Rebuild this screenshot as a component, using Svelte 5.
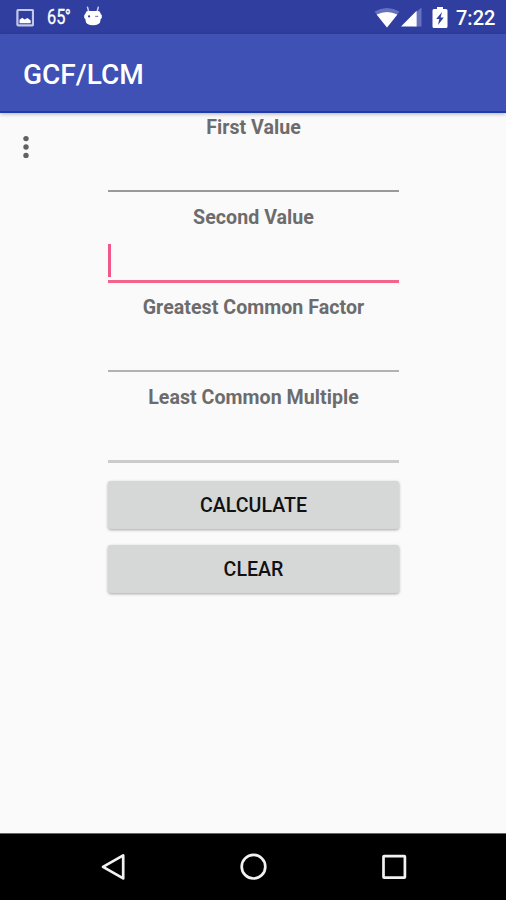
<script>
  let fields = $state([
    { label: 'First Value', kind: 'plain' },
    { label: 'Second Value', kind: 'focused' },
    { label: 'Greatest Common Factor', kind: 'light' },
    { label: 'Least Common Multiple', kind: 'disabled' }
  ]);
</script>

<div class="screen">
  <div class="status">
    <div class="group left">
      <svg class="picture" width="18" height="18" viewBox="0 0 18 18">
        <rect x="1.4" y="1" width="15.6" height="15.4" rx="1" fill="none" stroke="#c3c8e9" stroke-width="2.2" />
        <path d="M3.5 14.2V10.8L6.3 8.8L8.5 10.5L11.5 9L14.7 11.5V14.2Z" fill="#fff" />
      </svg>
      <span class="temp">65<span class="deg">°</span></span>
      <svg class="robot" width="20" height="21" viewBox="0 0 20 21">
        <path d="M4.5 1.2L5.8 6M15.3 1.2L14 6" stroke="#c9cff0" stroke-width="1.5" stroke-linecap="round" />
        <path d="M4.6 5H15.4Q17.3 5 17.5 7.6L18.8 9.2V12L17.5 13.3V14.5Q17 19.3 10 19.3Q3 19.3 2.5 14.5V13.3L1.2 12V9.2L2.5 7.6Q2.7 5 4.6 5Z" fill="#fff" />
        <circle cx="6.1" cy="10.4" r="1.1" fill="#303f9f" />
        <path d="M12.2 10.4H15.2" stroke="#7883c6" stroke-width="1.2" />
      </svg>
    </div>
    <div class="group right">
      <svg class="wifi" width="26" height="20" viewBox="0 0 26 20">
        <path d="M0.5 3.6Q13 -3.6 25.5 3.6L13 19.5Z" fill="#6672bd" />
        <path d="M2.6 6.6Q13 1.2 23.4 6.6L13 19.5Z" fill="#fff" />
      </svg>
      <svg class="signal" width="21" height="20" viewBox="0 0 21 20">
        <path d="M13 7L20.5 0.5V19.5H13Z" fill="#6672bd" />
        <path d="M0 19.5L15.6 3.8V19.5Z" fill="#fff" />
      </svg>
      <svg class="battery" width="16" height="21" viewBox="0 0 16 21">
        <path d="M5 0H11V2H14Q15.5 2 15.5 3.5V19.5Q15.5 21 14 21H2Q.5 21 .5 19.5V3.5Q.5 2 2 2H5Z" fill="#fff" />
        <path d="M10 5L4.2 12H7.3L6 18L11.8 10.5H8.6Z" fill="#303f9f" />
      </svg>
      <span class="time">7:22</span>
    </div>
  </div>

  <header><h1>GCF/LCM</h1></header>

  <main>
    <button class="more" aria-label="More options">
      <svg width="8" height="24" viewBox="0 0 8 24">
        <circle cx="4" cy="3.6" r="2.7" /><circle cx="4" cy="12" r="2.7" /><circle cx="4" cy="20.4" r="2.7" />
      </svg>
    </button>
    <div class="form">
      {#each fields as field}
        <div class="field">
          <div class="label">{field.label}</div>
          <div class="entry {field.kind}">
            {#if field.kind === 'focused'}<span class="caret"></span>{/if}
          </div>
        </div>
      {/each}
      <button class="action">CALCULATE</button>
      <button class="action">CLEAR</button>
    </div>
  </main>

  <nav>
    <svg width="30" height="30" viewBox="0 0 30 30"><path d="M25.2 3.4V26.4L5 14.9Z" /></svg>
    <svg width="30" height="30" viewBox="0 0 30 30"><circle cx="14.5" cy="14.7" r="11.8" /></svg>
    <svg width="30" height="30" viewBox="0 0 30 30"><rect x="4.5" y="4.2" width="21.4" height="21.4" rx=".6" /></svg>
  </nav>
</div>

<style>
  .screen {
    display: flex;
    flex-direction: column;
    width: 506px;
    height: 900px;
    overflow: hidden;
    background: #fafafa;
    font-family: Roboto, "Liberation Sans", sans-serif;
  }
  svg { display: block; flex: none; }
  .status {
    flex: none;
    display: flex;
    justify-content: space-between;
    height: 34px;
    background: #303f9f;
    color: #fff;
  }
  .group { display: flex; align-items: flex-start; }
  .left { padding-left: 16px; }
  .picture { margin-top: 9px; }
  .temp {
    width: 37px;
    margin: 5px 0 0 13px;
    font-size: 21px;
    line-height: 24px;
    transform: scaleX(0.78);
    transform-origin: left;
    color: #fff;
    -webkit-text-stroke: 0.3px #fff;
  }
  .deg { margin-left: -1px; }
  .robot { margin: 6px 0 0 -1px; }
  .right { padding-right: 10px; }
  .wifi { margin-top: 8px; }
  .signal { margin: 7px 0 0 1px; }
  .battery { margin: 7px 0 0 10px; }
  .time {
    width: 40px;
    margin: 6px 0 0 8px;
    font-size: 20px;
    font-weight: 500;
    line-height: 24px;
    white-space: nowrap;
  }
  header {
    flex: none;
    box-sizing: border-box;
    height: 79px;
    padding: 24px 0 0 23px;
    background: #3f51b5;
    border-bottom: 2px solid #1e3dab;
    box-shadow: 0 1px 4px rgba(0, 0, 0, 0.3);
    z-index: 1;
  }
  h1 {
    margin: 0;
    color: #fff;
    font-size: 28px;
    font-weight: 500;
    line-height: 34px;
  }
  main {
    flex: 1;
    display: flex;
    align-items: flex-start;
  }
  button { border: 0; font-family: inherit; }
  .more {
    width: 108px;
    padding: 22px 0 0 22px;
    background: none;
  }
  .more svg { fill: #616161; }
  .form {
    display: flex;
    flex-direction: column;
    width: 291px;
    padding-top: 2px;
  }
  .field { height: 90px; }
  .label {
    height: 26px;
    color: #6c6c6c;
    font-size: 19.6px;
    font-weight: 700;
    letter-spacing: 0.04px;
    line-height: 25px;
    text-align: center;
    white-space: nowrap;
  }
  .entry {
    box-sizing: border-box;
    height: 51px;
    border-bottom: 2px solid #999;
  }
  .entry.light { border-color: #b2b2b2; }
  .entry.focused { height: 52px; border-bottom: 3px solid #f5638c; }
  .entry.disabled { height: 52px; border-bottom: 3px solid #cbcbcb; }
  .caret {
    display: block;
    width: 3px;
    height: 33px;
    background: #f0588a;
    transform: translateY(13px);
  }
  .action {
    height: 48px;
    margin-top: 6px;
    padding: 2px 0 0;
    border-radius: 3px;
    background: #d6d7d7;
    box-shadow: 0 1px 3px rgba(0, 0, 0, 0.35);
    color: #111;
    font-size: 19.6px;
    font-weight: 500;
    line-height: 46px;
  }
  .action + .action { margin-top: 16px; }
  nav {
    flex: none;
    box-sizing: border-box;
    display: flex;
    justify-content: space-between;
    height: 67px;
    padding: 18px 97px 0 98px;
    border-top: 1px solid #666;
    background: #000;
  }
  nav svg { fill: none; stroke: #f2f2f2; stroke-width: 2.7; stroke-linejoin: round; }
</style>
